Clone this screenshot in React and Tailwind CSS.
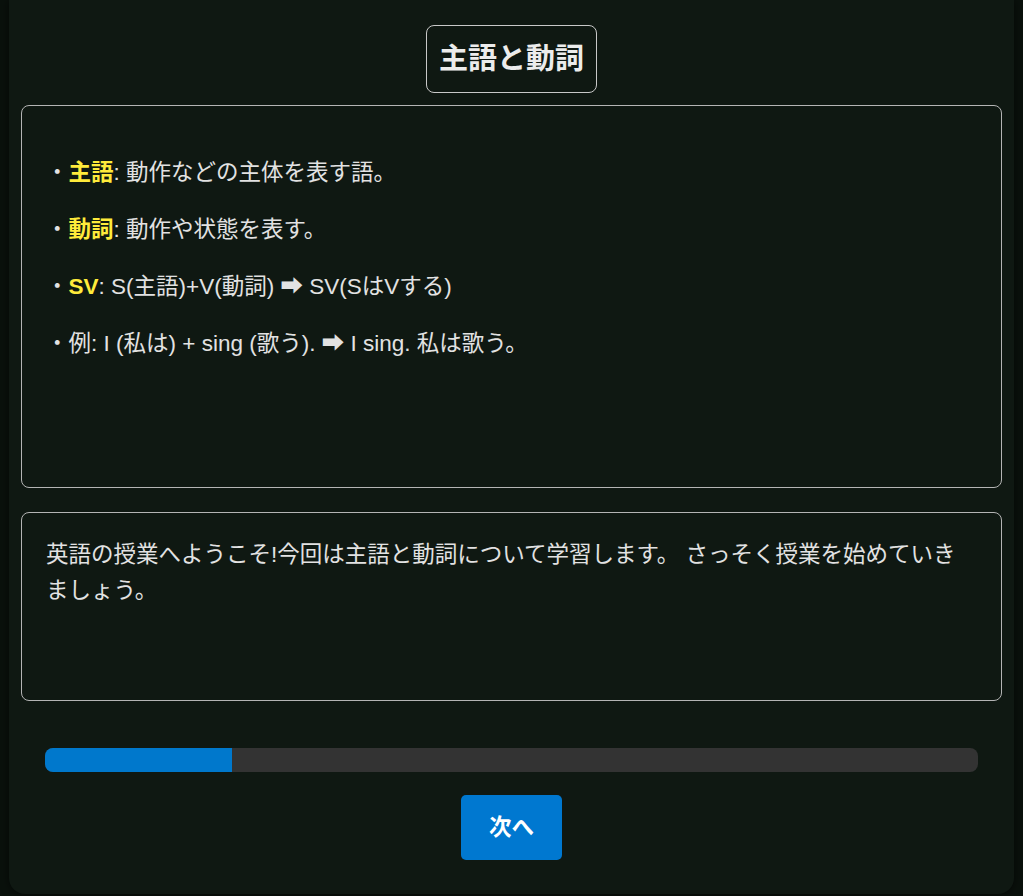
import React from "react";

const font = { fontFamily: '"Liberation Sans", "Noto Sans CJK JP", "DejaVu Sans", sans-serif' };

function Item({ label, children }) {
  return (
    <p className="text-[22.5px] leading-[35px] text-[#e2e2e2]">
      ・{label && <strong className="font-bold text-[#ffeb3b]">{label}</strong>}
      {children}
    </p>
  );
}

export default function App() {
  return (
    <div className="min-h-[896px] w-full bg-[#0a110c]" style={font}>
      <div className="mx-[9px] flex flex-col items-stretch rounded-b-2xl bg-[#0f1812] px-3 pb-[34px] pt-[25px] shadow-[0_0_10px_rgba(0,0,0,0.6)]">
        <div className="flex justify-center">
          <h2 className="rounded-lg border border-[#c8c8c8] px-3 py-3 text-[29px] font-bold leading-[42px] text-[#ececec]">
            主語と動詞
          </h2>
        </div>
        <div className="mt-3 flex h-[383px] flex-col gap-[22px] rounded-lg border border-[#b4b4b4] px-6 pt-[49px]">
          <Item label="主語">: 動作などの主体を表す語。</Item>
          <Item label="動詞">: 動作や状態を表す。</Item>
          <Item label="SV">: S(主語)+V(動詞) {"\u27A1\uFE0E"} SV(SはVする)</Item>
          <Item>例: I (私は) + sing (歌う). {"\u27A1\uFE0E"} I sing. 私は歌う。</Item>
        </div>
        <div className="mt-6 h-[189px] rounded-lg border border-[#b4b4b4] px-6 py-6">
          <p className="text-[22.5px] leading-[36px] text-[#e2e2e2]">
            英語の授業へようこそ!今回は主語と動詞について学習します。 さっそく授業を始めていきましょう。
          </p>
        </div>
        <div className="mx-6 mt-[47px] h-[24px] overflow-hidden rounded-lg bg-[#333333]">
          <div className="h-full bg-[#0078cc]" style={{ width: "20%" }} />
        </div>
        <div className="mt-[23px] flex justify-center">
          <button className="h-[65px] w-[101px] rounded-[5px] bg-[#0078d0] text-[22.5px] font-bold text-white">
            次へ
          </button>
        </div>
      </div>
    </div>
  );
}
